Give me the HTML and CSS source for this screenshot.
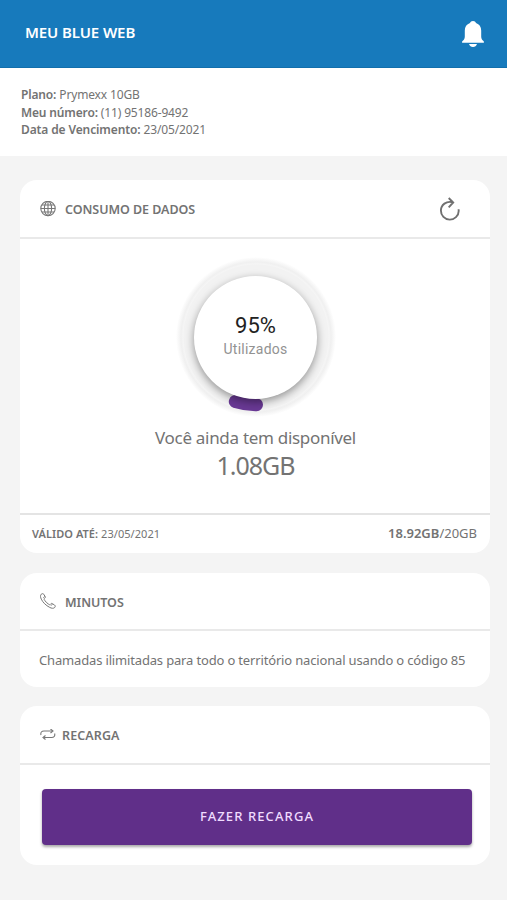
FILE: index.html
```html
<!DOCTYPE html>
<html lang="pt-BR">
<head>
<meta charset="utf-8">
<title>Meu Blue Web</title>
<link rel="stylesheet" href="styles.css">
</head>
<body>
<header class="topbar">
  <h1>MEU BLUE WEB</h1>
  <svg class="bell" width="24" height="28" viewBox="0 0 24 28" fill="#fff"><path d="M12 1c1.600 0 2.600.8 3 2 3.400 1.100 5.200 4 5.200 7.600v5.900c0 2 .7 3.200 2 4.200 1.100.8 1.100 2.100-.1 2.100H1.900c-1.200 0-1.200-1.300-.1-2.100 1.300-1 2-2.200 2-4.200v-5.900C3.800 7 5.600 4.100 9 3c.4-1.200 1.400-2 3-2zM8 24h8c-.7 1.900-2 3-4 3s-3.300-1.100-4-3z"/></svg>
</header>
<section class="account">
  <p><b>Plano:</b> <span>Prymexx 10GB</span></p>
  <p><b>Meu número:</b> <span>(11) 95186-9492</span></p>
  <p class="due"><b>Data de Vencimento:</b> <span>23/05/2021</span></p>
</section>
<main>
  <section class="card usage">
    <div class="card-head">
      <svg width="16" height="16" viewBox="0 0 16 16" fill="none" stroke="#777" stroke-width="1.100"><circle cx="8" cy="7.500" r="7.200"/><ellipse cx="8" cy="7.500" rx="3.600" ry="7.200"/><path d="M8 .3v14.400M.8 7.500h14.400M1.800 4h12.400M1.800 11h12.400"/></svg>
      <h2 class="usage-title">CONSUMO DE DADOS</h2>
      <svg class="refresh" width="22" height="26" viewBox="0 0 22 26" fill="none" stroke="#707070" stroke-width="1.900"><path d="M14 6.300C7.300 4.400 1.900 9 1.900 14.600a8.900 8.900 0 0 0 17.800.3l-.1-1.700M9.700 2l4.500 4.500-4.500 4.900"/></svg>
    </div>
    <div class="usage-body">
      <div class="gauge">
        <svg class="arc" width="160" height="160" viewBox="0 0 160 160"><path d="M59.300 144.600A67 67 0 0 0 80.500 147.700" fill="none" stroke="#693994" stroke-width="13" stroke-linecap="round"/></svg>
        <div class="dial"><strong>95%</strong><span>Utilizados</span></div>
      </div>
      <p class="available">Você ainda tem disponível</p>
      <p class="amount">1.08GB</p>
    </div>
    <div class="card-foot">
      <p class="valid"><b>VÁLIDO ATÉ:</b> <span>23/05/2021</span></p>
      <p class="quota"><b>18.92GB</b>/20GB</p>
    </div>
  </section>
  <section class="card minutes">
    <div class="card-head">
      <svg width="16" height="16" viewBox="0 0 16 16" fill="none" stroke="#777" stroke-width="1" stroke-linejoin="round"><path d="M1.300 1.200C2 .5 3.100.4 3.700 1.200l1.500 2.400c.4.700.1 1.300-.6 1.700-.7.500-.6 1 0 1.900 1.100 1.700 2.300 2.900 4 4 .9.600 1.400.700 1.900 0 .4-.7 1.100-1 1.800-.6l2.300 1.500c.9.600.8 1.600.1 2.400-1.200 1.200-3.200.9-5-.1C5.700 12.300 3 9.500 1.300 6.200.4 4.400.1 2.400 1.300 1.200zM3.400 4.800l1.400-1.500M11 12.700l1.400-1.600"/></svg>
      <h2 class="minutes-title">MINUTOS</h2>
    </div>
    <p class="calls">Chamadas ilimitadas para todo o território nacional usando o código 85</p>
  </section>
  <section class="card recharge">
    <div class="card-head">
      <svg width="16" height="12" viewBox="0 0 16 12" fill="none" stroke="#777" stroke-width="1.100"><path d="M1 6C.3 3.300 1.700 2 4 2h8M14.600 4.500c.7 2.700-.7 4-3 4H4"/><path d="M10.500 0l2.500 2-2.500 2M5.500 6.500L3 8.500l2.500 2"/></svg>
      <h2 class="recharge-title">RECARGA</h2>
    </div>
    <div class="action"><button>FAZER RECARGA</button></div>
  </section>
</main>
</body>
</html>
```
FILE: styles.css
```css
* { box-sizing: border-box; }
body { margin: 0; height: 900px; background: #f4f4f4; color: #737373; font-family: "Noto Sans", "Open Sans", sans-serif; overflow: hidden; }
p, h1, h2 { margin: 0; white-space: nowrap; }
svg { display: block; flex: none; }
.topbar { height: 68px; background: #177abc; border-bottom: 1px solid #126fac; display: flex; align-items: center; justify-content: space-between; padding: 0 22px 2px 25px; }
h1 { color: #fff; font-size: 15px; line-height: 20px; font-weight: 600; letter-spacing: -0.1px; padding-bottom: 2px; }
.bell { margin-top: 2px; }
.account { height: 88px; background: #fff; padding: 18px 21px 0; font-size: 12px; line-height: 17.500px; letter-spacing: -0.15px; }
.due { letter-spacing: -0.12px; }
b { font-weight: 600; }
main { display: flex; flex-direction: column; padding: 24px 17px 0 20px; }
.card { background: #fff; border-radius: 17px; overflow: hidden; }
.usage { height: 373px; margin-bottom: 20px; }
.minutes { height: 114px; margin-bottom: 19px; }
.recharge { height: 159px; }
.card-head { height: 59px; display: flex; align-items: center; border-bottom: 2px solid #e9e9e9; padding: 0 29px 0 20px; }
h2 { font-size: 12.500px; line-height: 18px; font-weight: 600; margin: 2px 0 0 9px; letter-spacing: -0.05px; }
.recharge-title { margin-left: 6px; letter-spacing: .1px; }
.refresh { margin-left: auto; margin-top: 1px; }
.usage-body { height: 274px; display: flex; flex-direction: column; align-items: center; padding: 18px 0 0 1px; }
.gauge { position: relative; width: 160px; height: 160px; display: flex; align-items: center; justify-content: center; border-radius: 50%; background: radial-gradient(circle, #f2f2f2 0 72px, #f5f5f5 73px, #f0f0f0 75px, #f6f6f6 77px, #fff 80px); }
.arc { position: absolute; inset: 0; }
.dial { position: relative; width: 123px; height: 123px; border-radius: 50%; background: #fff; box-shadow: 0 3px 8px rgba(0,0,0,.4); display: flex; flex-direction: column; align-items: center; padding-top: 37px; font-family: Roboto, sans-serif; }
.dial strong { font-size: 22px; line-height: 26px; font-weight: 400; color: #222; }
.dial span { font-size: 14px; line-height: 20px; color: #929292; letter-spacing: .25px; }
.available { margin-top: 9px; font-size: 17px; line-height: 24px; letter-spacing: -0.3px; }
.amount { font-size: 25px; line-height: 32px; letter-spacing: -1px; margin-top: -1px; }
.card-foot { height: 40px; border-top: 2px solid #e4e4e4; display: flex; align-items: center; justify-content: space-between; padding: 0 13px 2px 12px; }
.valid { font-size: 11px; letter-spacing: .05px; }
.quota { font-size: 13px; }
.calls { padding: 20px 19px 0; font-size: 13px; line-height: 18px; letter-spacing: -.16px; }
.minutes .card-head { height: 58px; }
.minutes h2 { margin-top: 3px; }
.action { padding: 24px 18px 0 22px; }
button { display: block; width: 100%; height: 56px; border: 0; border-radius: 4px; background: #602f89; color: #f0dcff; font: 500 13px "Noto Sans", sans-serif; letter-spacing: 1.100px; padding-bottom: 3px; box-shadow: 0 2px 3px rgba(0,0,0,.35); }
```
